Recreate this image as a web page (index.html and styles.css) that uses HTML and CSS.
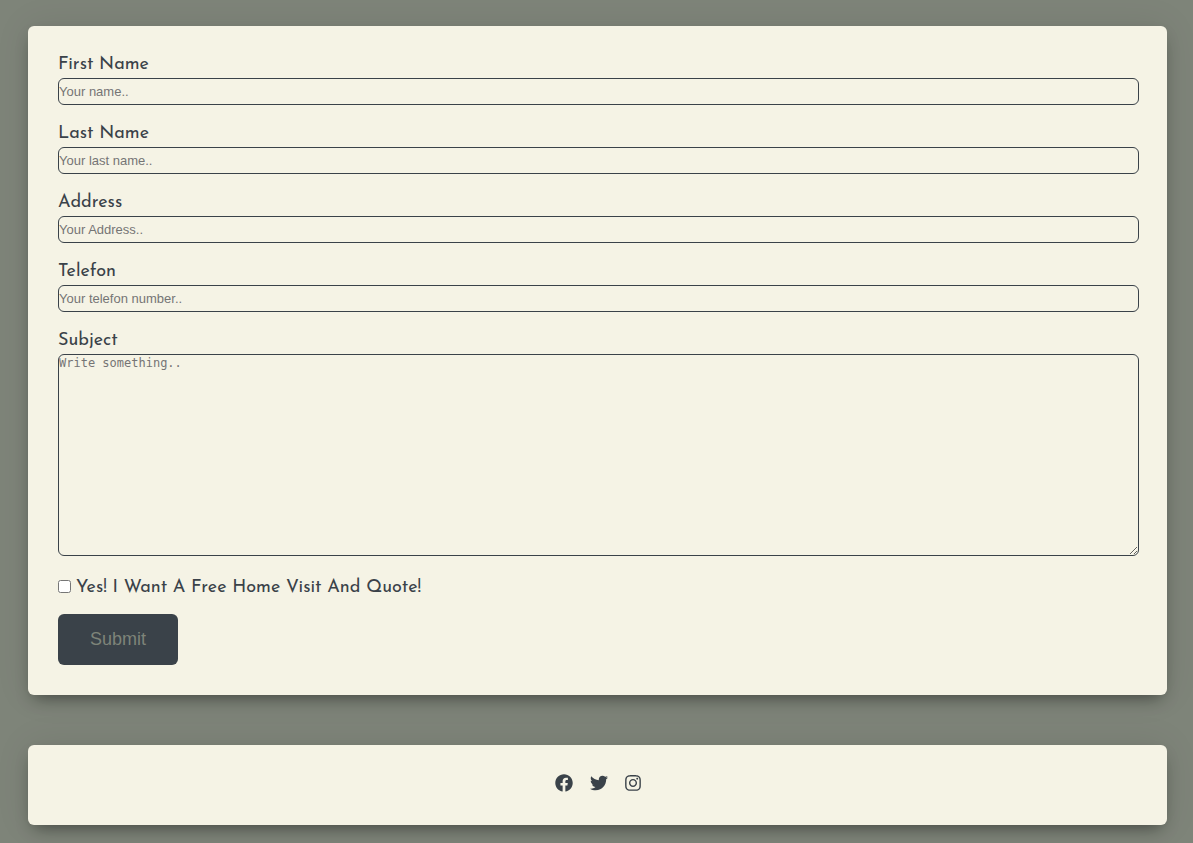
FILE: index.html
```
<!DOCTYPE html>
<html lang="en">
<head>
<meta charset="utf-8">
<meta name="viewport" content="width=device-width, initial-scale=1">
<title>Contact</title>
<link rel="stylesheet" href="styles.css">
</head>
<body>
<main class="card contact">
  <form class="contact-form">
    <div class="field">
      <label for="fname">First Name</label>
      <input class="control" type="text" id="fname" name="firstname" placeholder="Your name..">
    </div>
    <div class="field">
      <label for="lname">Last Name</label>
      <input class="control" type="text" id="lname" name="lastname" placeholder="Your last name..">
    </div>
    <div class="field">
      <label for="address">Address</label>
      <input class="control" type="text" id="address" name="address" placeholder="Your Address..">
    </div>
    <div class="field">
      <label for="telefon">Telefon</label>
      <input class="control" type="text" id="telefon" name="telefon" placeholder="Your telefon number..">
    </div>
    <div class="field">
      <label for="subject">Subject</label>
      <textarea class="control message" id="subject" name="subject" placeholder="Write something.."></textarea>
    </div>
    <div class="consent">
      <input type="checkbox" id="visit" name="visit">
      <label for="visit">Yes! I Want A Free Home Visit And Quote!</label>
    </div>
    <button class="submit" type="submit">Submit</button>
  </form>
</main>
<footer class="card social">
  <a href="#" aria-label="Facebook"><svg class="icon" viewBox="0 0 512 512"><path d="M504 256C504 119 393 8 256 8S8 119 8 256c0 123.780 90.690 226.380 209.250 245V327.690h-63V256h63v-54.640c0-62.150 37-96.480 93.670-96.480 27.140 0 55.520 4.840 55.520 4.840v61h-31.280c-30.800 0-40.410 19.120-40.410 38.730V256h68.780l-11 71.690h-57.780V501C413.310 482.380 504 379.780 504 256z"/></svg></a>
  <a href="#" aria-label="Twitter"><svg class="icon" viewBox="0 0 512 512"><path d="M459.370 151.716c.325 4.548.325 9.097.325 13.645 0 138.720-105.583 298.558-298.558 298.558-59.452 0-114.680-17.219-161.137-47.106 8.447.974 16.568 1.299 25.340 1.299 49.055 0 94.213-16.568 130.274-44.832-46.132-.975-84.792-31.188-98.112-72.772 6.498.974 12.995 1.624 19.818 1.624 9.421 0 18.843-1.300 27.614-3.573-48.081-9.747-84.143-51.980-84.143-102.985v-1.299c13.969 7.797 30.214 12.670 47.431 13.319-28.264-18.843-46.781-51.005-46.781-87.391 0-19.492 5.197-37.360 14.294-52.954 51.655 63.675 129.300 105.258 216.365 109.807-1.624-7.797-2.599-15.918-2.599-24.040 0-57.828 46.782-104.934 104.934-104.934 30.213 0 57.502 12.670 76.670 33.137 23.715-4.548 46.456-13.320 66.599-25.340-7.798 24.366-24.366 44.833-46.132 57.827 21.117-2.273 41.584-8.122 60.426-16.243-14.292 20.791-32.161 39.308-52.628 54.253z"/></svg></a>
  <a href="#" aria-label="Instagram"><svg class="icon icon-narrow" viewBox="0 0 448 512"><path d="M224.100 141c-63.600 0-114.900 51.300-114.900 114.900s51.300 114.900 114.900 114.900S339 319.500 339 255.900 287.700 141 224.100 141zm0 189.600c-41.100 0-74.700-33.500-74.700-74.700s33.500-74.700 74.700-74.700 74.700 33.500 74.700 74.700-33.600 74.700-74.700 74.700zm146.400-194.300c0 14.900-12 26.800-26.800 26.800-14.900 0-26.800-12-26.800-26.800s12-26.800 26.800-26.800 26.800 12 26.800 26.800zm76.100 27.200c-1.700-35.900-9.900-67.700-36.200-93.900-26.200-26.200-58-34.400-93.900-36.200-37-2.100-147.900-2.100-184.900 0-35.800 1.700-67.600 9.900-93.900 36.100s-34.400 58-36.200 93.900c-2.100 37-2.100 147.900 0 184.900 1.700 35.900 9.900 67.700 36.200 93.900s58 34.400 93.900 36.200c37 2.100 147.900 2.100 184.900 0 35.900-1.700 67.700-9.900 93.900-36.200 26.200-26.200 34.400-58 36.200-93.900 2.100-37 2.100-147.800 0-184.800zM398.800 388c-7.800 19.600-22.900 34.700-42.600 42.600-29.500 11.700-99.500 9-132.100 9s-102.700 2.600-132.100-9c-19.600-7.800-34.700-22.900-42.600-42.600-11.700-29.500-9-99.500-9-132.100s-2.600-102.700 9-132.100c7.800-19.600 22.900-34.700 42.600-42.600 29.500-11.700 99.500-9 132.100-9s102.700-2.600 132.100 9c19.600 7.800 34.700 22.900 42.600 42.600 11.700 29.500 9 99.500 9 132.100s2.700 102.700-9 132.100z"/></svg></a>
</footer>
</body>
</html>
```
FILE: styles.css
```
* {
  box-sizing: border-box;
}

body {
  margin: 0;
  padding: 26px 26px 18px 28px;
  display: flex;
  flex-direction: column;
  gap: 50px;
  background: #7e8479;
  color: #3a4249;
  font-family: "Josefin Sans", Lato, sans-serif;
  font-size: 18px;
  font-weight: 400;
  line-height: 26px;
}

.card {
  background: #f5f3e5;
  border-radius: 6px;
  box-shadow: 0 0 36px rgba(0, 0, 0, 0.08), 0 8px 16px -6px rgba(0, 0, 0, 0.45);
}

.contact {
  padding: 26px 28px 30px 30px;
}

.contact-form {
  display: flex;
  flex-direction: column;
  align-items: stretch;
}

.field {
  display: flex;
  flex-direction: column;
  margin-bottom: 16px;
}

.control {
  display: block;
  width: 100%;
  height: 27px;
  padding: 0;
  border: 1px solid #3a4249;
  border-radius: 6px;
  background: transparent;
  color: #3a4249;
  font: 13px "Liberation Sans", Arial, sans-serif;
}

.control::placeholder {
  color: #757575;
}

.message {
  height: 202px;
  padding-top: 1px;
  font: 12px "DejaVu Sans Mono", monospace;
  resize: vertical;
}

.consent {
  display: flex;
  align-items: flex-start;
  gap: 5px;
  margin: 3px 0 13px;
}

.consent input {
  width: 13px;
  height: 13px;
  margin: 5px 0 0;
}

.submit {
  align-self: flex-start;
  padding: 15px 32px;
  border: 0;
  border-radius: 6px;
  background: #3a4249;
  color: #7e8479;
  font: 18px/21px "Liberation Sans", Arial, sans-serif;
}

.social {
  display: flex;
  justify-content: center;
  align-items: center;
  gap: 17px;
  padding: 29px 30px 33px;
}

.social a {
  display: block;
  color: #3a4249;
}

.icon {
  display: block;
  width: 18px;
  height: 18px;
  fill: currentColor;
}

.icon-narrow {
  width: 16px;
}
```
